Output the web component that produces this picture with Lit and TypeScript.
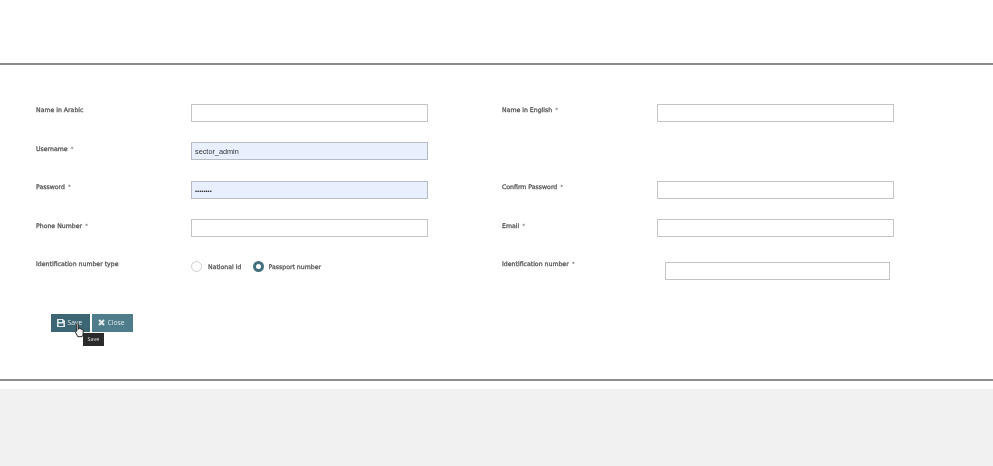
import { LitElement, html, css } from "lit";
import { customElement } from "lit/decorators.js";

@customElement("app-root")
export class AppRoot extends LitElement {
  static styles = css`
    :host { display: block; width: 993px; height: 466px; background: #fff; overflow: hidden; font-family: "DejaVu Sans", sans-serif; color: #555; }
    .panel { margin-top: 63px; height: 318px; box-sizing: border-box; border-top: 2px solid #8a8a8a; border-bottom: 2px solid #8f8f8f; padding: 39px 0 0 36px; position: relative; }
    .form { display: grid; grid-template-columns: 155px 237px 74px 155.4px 237px; grid-auto-rows: 18px; row-gap: 20.4px; }
    .label, .rl, .input, button, .tip { filter: blur(.25px); }
    .label { font-size: 6.2px; font-weight: 400; -webkit-text-stroke: .3px #5a5a5a; line-height: 12px; padding-top: .4px; white-space: nowrap; color: #5a5a5a; }
    .req { -webkit-text-stroke: 0; margin-left: 1px; }
    .input { box-sizing: border-box; height: 18px; border: 1px solid #c4c4c4; background: #fff; font: 7.3px/18px "Liberation Sans", sans-serif; color: #333; padding-left: 3px; }
    .filled { background: #e8f0fe; border-color: #b8bcc4; }
    .dots { font-size: 6px; font-weight: 700; color: #333; }
    .radios { display: flex; align-items: center; margin-top: 2.4px; height: 14px; }
    .radio { width: 11px; height: 11px; box-sizing: border-box; border-radius: 50%; border: 1px solid #d0d0d0; background: #fff; flex: none; }
    .on { border: 3px solid #44707e; }
    .rl { font-size: 6.2px; -webkit-text-stroke: .3px #5a5a5a; color: #5a5a5a; margin: 0 11px 0 6px; white-space: nowrap; }
    .rl.last { margin: 0 0 0 5px; }
    .id-input { margin: 4.4px 4px 0 8px; }
    .actions { display: flex; gap: 2px; margin: 38px 0 0 15px; }
    button { display: flex; align-items: center; box-sizing: border-box; height: 18px; border: 0; padding: 0 0 0 6px; gap: 2.5px; color: #dfe9ec; font: 6.8px "Open Sans", sans-serif; }
    .save { width: 39px; background: #3c6674; }
    .close { width: 41px; background: #4e7c8a; }
    svg { display: block; }
    .tip { position: absolute; left: 83px; top: 268px; width: 21px; height: 13px; background: #2b2b2b; color: #ddd; font: 5.5px/13px "Open Sans", sans-serif; text-align: center; }
    .cursor { position: absolute; left: 74px; top: 258px; }
    .footer { margin-top: 8px; height: 77px; background: #f1f1f1; }
  `;

  private lab(t: string, req = false) {
    return html`<div class="label">${t}${req ? html`<span class="req"> *</span>` : ""}</div>`;
  }

  render() {
    return html`
      <div class="panel">
        <div class="form">
          ${this.lab("Name in Arabic")}<div class="input"></div><div></div>
          ${this.lab("Name in English", true)}<div class="input"></div>

          ${this.lab("Username", true)}<div class="input filled">sector_admin</div><div></div>
          <div></div><div></div>

          ${this.lab("Password", true)}<div class="input filled dots">••••••••</div><div></div>
          ${this.lab("Confirm Password", true)}<div class="input"></div>

          ${this.lab("Phone Number", true)}<div class="input"></div><div></div>
          ${this.lab("Email", true)}<div class="input"></div>

          <div class="label">Identification number type</div>
          <div class="radios">
            <div class="radio"></div><span class="rl">National Id</span>
            <div class="radio on"></div><span class="rl last">Passport number</span>
          </div>
          <div></div>
          <div class="label">Identification number<span class="req"> *</span></div>
          <div class="input id-input"></div>
        </div>
        <div class="actions">
          <button class="save">
            <svg width="8" height="8" viewBox="0 0 8 8"><path fill="#dfe9ec" d="M0 0h6l2 2v6H0z"/><path fill="#3c6674" d="M1.6 1h3.6v2H1.6zM1.6 4.6h4.8V7H1.6z"/></svg>
            Save
          </button>
          <button class="close">
            <svg width="7" height="7" viewBox="0 0 7 7"><path stroke="#dfe9ec" stroke-width="2.2" d="M1 1l5 5M6 1L1 6"/></svg>
            Close
          </button>
        </div>
        <div class="tip">Save</div>
        <svg class="cursor" width="11" height="15" viewBox="0 0 10 14"><path fill="#f4f4f4" stroke="#1c1c1c" stroke-width=".9" d="M2.5 1c.6-.6 1.4 0 1.4.7V6l.2-1c.8-.4 1.3 0 1.4.5.7-.4 1.3 0 1.4.5.8-.3 1.4.1 1.5.8v3c0 1.3-.5 2-1 3H3.4L1.2 8.6c-.4-.8.4-1.4 1.2-.8V1.6z"/></svg>
      </div>
      <div class="footer"></div>
    `;
  }
}
